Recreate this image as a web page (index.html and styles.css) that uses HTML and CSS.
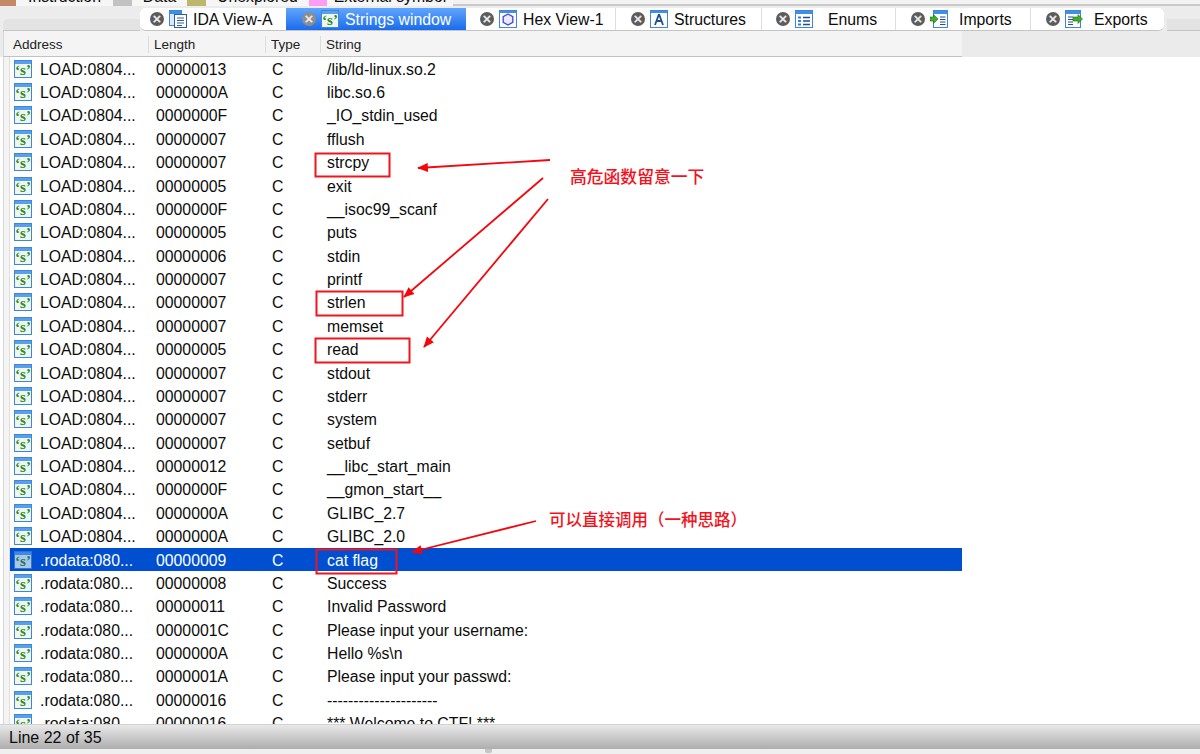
FILE: index.html
```html
<!DOCTYPE html>
<html lang="en">
<head>
<meta charset="utf-8">
<title>Strings window</title>
<link rel="stylesheet" href="styles.css">
</head>
<body>
<svg class="defs" width="0" height="0" aria-hidden="true">
  <symbol id="i-s" viewBox="0 0 18 18">
    <rect x=".5" y=".5" width="17" height="17" fill="#fff" stroke="#3d86dc"/>
    <rect x="1" y="1" width="16" height="3" fill="#58a0ee"/>
    <rect x="1" y="4" width="16" height="13" fill="#eef6f2"/>
    <text x="9" y="15" class="s-glyph" text-anchor="middle">‘s’</text>
  </symbol>
  <symbol id="i-ida" viewBox="0 0 18 18">
    <rect x=".5" y=".5" width="12" height="15" fill="#dbe9fb" stroke="#3d86dc"/>
    <rect x="1" y="1" width="11" height="3" fill="#3f8fe6"/>
    <rect x="5.500" y="4.500" width="12" height="13" fill="#fff" stroke="#2a5ea8"/>
    <path d="M8 8h7M8 10.500h7M8 13h7M8 15.500h5" stroke="#34609c" fill="none"/>
  </symbol>
  <symbol id="i-hex" viewBox="0 0 18 18">
    <rect x=".5" y=".5" width="17" height="17" fill="#fff" stroke="#3d86dc"/>
    <rect x="1" y="1" width="16" height="2" fill="#3f8fe6"/>
    <path d="M9 4l4.800 2.700v5.600L9 15l-4.800-2.700V6.700z" fill="#e9e9ff" stroke="#4a4ae0" stroke-width="1.400"/>
  </symbol>
  <symbol id="i-struct" viewBox="0 0 18 18">
    <rect x=".5" y=".5" width="17" height="17" fill="#fff" stroke="#3d86dc"/>
    <rect x="1" y="1" width="16" height="2" fill="#3f8fe6"/>
    <path d="M9 4L5 15M9 4l4 11M6.500 11h5" stroke="#234f8f" stroke-width="1.800" fill="none"/>
  </symbol>
  <symbol id="i-enum" viewBox="0 0 18 18">
    <rect x=".5" y=".5" width="17" height="17" fill="#fff" stroke="#3d86dc"/>
    <rect x="1" y="1" width="16" height="3" fill="#3f8fe6"/>
    <path d="M3 6.500h3v2H3zM3 10h3v2H3zM3 13.500h3v2H3z" fill="#2f7fe0"/>
    <path d="M8 7.500h7M8 11h7M8 14.500h7" stroke="#1f4f96" stroke-width="1.300"/>
  </symbol>
  <symbol id="i-imp" viewBox="0 0 18 18">
    <rect x="3.500" y=".5" width="14" height="17" fill="#fff" stroke="#3d86dc"/>
    <rect x="4" y="1" width="13" height="3" fill="#3f8fe6"/>
    <path d="M10 7h5.500M10 9.500h5.500M10 12h5.500M10 14.500h5.500" stroke="#1f4f96"/>
    <path d="M0 7h3.500V4.500L8 9l-4.500 4.500V11H0z" fill="#3fae2a" stroke="#1c6e12" stroke-width=".6"/>
  </symbol>
  <symbol id="i-exp" viewBox="0 0 18 18">
    <rect x=".5" y=".5" width="15" height="17" fill="#fff" stroke="#3d86dc"/>
    <rect x="1" y="1" width="14" height="3" fill="#3f8fe6"/>
    <path d="M3 7h5M3 9.500h5M3 12h5M3 14.500h5" stroke="#1f4f96"/>
    <path d="M8 7h5V4.500L17.500 9 13 13.500V11H8z" fill="#3fae2a" stroke="#1c6e12" stroke-width=".6"/>
  </symbol>
</svg>

<div class="legend">
  <span class="swatch swatch-code"></span><span class="legend-item legend-instruction">Instruction</span>
  <span class="swatch swatch-data"></span><span class="legend-item legend-data">Data</span>
  <span class="swatch swatch-unexplored"></span><span class="legend-item legend-unexplored">Unexplored</span>
  <span class="swatch swatch-external"></span><span class="legend-item legend-external">External symbol</span>
  <span class="legend-rest"></span>
</div>

<div class="tabbar">
  <div class="tab-pad"><div class="tab-pad-fill"></div></div>
  <div class="tabs">
    <div class="tab tab-ida"><span class="close">×</span><svg class="tab-icon"><use href="#i-ida"/></svg><span class="tab-label">IDA View-A</span></div>
    <div class="tab tab-strings active"><span class="close">×</span><svg class="tab-icon"><use href="#i-s"/></svg><span class="tab-label">Strings window</span></div>
    <div class="tab tab-hex"><span class="close">×</span><svg class="tab-icon"><use href="#i-hex"/></svg><span class="tab-label">Hex View-1</span></div>
    <div class="tab tab-struct"><span class="close">×</span><svg class="tab-icon"><use href="#i-struct"/></svg><span class="tab-label">Structures</span></div>
    <div class="tab tab-enum"><span class="close">×</span><svg class="tab-icon"><use href="#i-enum"/></svg><span class="tab-label">Enums</span></div>
    <div class="tab tab-imp"><span class="close">×</span><svg class="tab-icon"><use href="#i-imp"/></svg><span class="tab-label">Imports</span></div>
    <div class="tab tab-exp"><span class="close">×</span><svg class="tab-icon"><use href="#i-exp"/></svg><span class="tab-label">Exports</span></div>
  </div>
  <div class="tab-tail"><div class="tab-pad-fill"></div></div>
</div>

<div class="head">
  <div class="head-cells">
    <span class="hc hc-addr">Address</span>
    <span class="hc hc-len">Length</span>
    <span class="hc hc-type">Type</span>
    <span class="hc hc-str">String</span>
  </div>
</div>

<main class="list">
  <div class="row"><svg class="ri"><use href="#i-s"/></svg><span class="c-addr">LOAD:0804...</span><span class="c-len">00000013</span><span class="c-type">C</span><span class="c-str">/lib/ld-linux.so.2</span></div>
  <div class="row"><svg class="ri"><use href="#i-s"/></svg><span class="c-addr">LOAD:0804...</span><span class="c-len">0000000A</span><span class="c-type">C</span><span class="c-str">libc.so.6</span></div>
  <div class="row"><svg class="ri"><use href="#i-s"/></svg><span class="c-addr">LOAD:0804...</span><span class="c-len">0000000F</span><span class="c-type">C</span><span class="c-str">_IO_stdin_used</span></div>
  <div class="row"><svg class="ri"><use href="#i-s"/></svg><span class="c-addr">LOAD:0804...</span><span class="c-len">00000007</span><span class="c-type">C</span><span class="c-str">fflush</span></div>
  <div class="row"><svg class="ri"><use href="#i-s"/></svg><span class="c-addr">LOAD:0804...</span><span class="c-len">00000007</span><span class="c-type">C</span><span class="c-str">strcpy</span></div>
  <div class="row"><svg class="ri"><use href="#i-s"/></svg><span class="c-addr">LOAD:0804...</span><span class="c-len">00000005</span><span class="c-type">C</span><span class="c-str">exit</span></div>
  <div class="row"><svg class="ri"><use href="#i-s"/></svg><span class="c-addr">LOAD:0804...</span><span class="c-len">0000000F</span><span class="c-type">C</span><span class="c-str">__isoc99_scanf</span></div>
  <div class="row"><svg class="ri"><use href="#i-s"/></svg><span class="c-addr">LOAD:0804...</span><span class="c-len">00000005</span><span class="c-type">C</span><span class="c-str">puts</span></div>
  <div class="row"><svg class="ri"><use href="#i-s"/></svg><span class="c-addr">LOAD:0804...</span><span class="c-len">00000006</span><span class="c-type">C</span><span class="c-str">stdin</span></div>
  <div class="row"><svg class="ri"><use href="#i-s"/></svg><span class="c-addr">LOAD:0804...</span><span class="c-len">00000007</span><span class="c-type">C</span><span class="c-str">printf</span></div>
  <div class="row"><svg class="ri"><use href="#i-s"/></svg><span class="c-addr">LOAD:0804...</span><span class="c-len">00000007</span><span class="c-type">C</span><span class="c-str">strlen</span></div>
  <div class="row"><svg class="ri"><use href="#i-s"/></svg><span class="c-addr">LOAD:0804...</span><span class="c-len">00000007</span><span class="c-type">C</span><span class="c-str">memset</span></div>
  <div class="row"><svg class="ri"><use href="#i-s"/></svg><span class="c-addr">LOAD:0804...</span><span class="c-len">00000005</span><span class="c-type">C</span><span class="c-str">read</span></div>
  <div class="row"><svg class="ri"><use href="#i-s"/></svg><span class="c-addr">LOAD:0804...</span><span class="c-len">00000007</span><span class="c-type">C</span><span class="c-str">stdout</span></div>
  <div class="row"><svg class="ri"><use href="#i-s"/></svg><span class="c-addr">LOAD:0804...</span><span class="c-len">00000007</span><span class="c-type">C</span><span class="c-str">stderr</span></div>
  <div class="row"><svg class="ri"><use href="#i-s"/></svg><span class="c-addr">LOAD:0804...</span><span class="c-len">00000007</span><span class="c-type">C</span><span class="c-str">system</span></div>
  <div class="row"><svg class="ri"><use href="#i-s"/></svg><span class="c-addr">LOAD:0804...</span><span class="c-len">00000007</span><span class="c-type">C</span><span class="c-str">setbuf</span></div>
  <div class="row"><svg class="ri"><use href="#i-s"/></svg><span class="c-addr">LOAD:0804...</span><span class="c-len">00000012</span><span class="c-type">C</span><span class="c-str">__libc_start_main</span></div>
  <div class="row"><svg class="ri"><use href="#i-s"/></svg><span class="c-addr">LOAD:0804...</span><span class="c-len">0000000F</span><span class="c-type">C</span><span class="c-str">__gmon_start__</span></div>
  <div class="row"><svg class="ri"><use href="#i-s"/></svg><span class="c-addr">LOAD:0804...</span><span class="c-len">0000000A</span><span class="c-type">C</span><span class="c-str">GLIBC_2.7</span></div>
  <div class="row"><svg class="ri"><use href="#i-s"/></svg><span class="c-addr">LOAD:0804...</span><span class="c-len">0000000A</span><span class="c-type">C</span><span class="c-str">GLIBC_2.0</span></div>
  <div class="row selected"><svg class="ri"><use href="#i-s"/></svg><span class="c-addr">.rodata:080...</span><span class="c-len">00000009</span><span class="c-type">C</span><span class="c-str">cat flag</span></div>
  <div class="row"><svg class="ri"><use href="#i-s"/></svg><span class="c-addr">.rodata:080...</span><span class="c-len">00000008</span><span class="c-type">C</span><span class="c-str">Success</span></div>
  <div class="row"><svg class="ri"><use href="#i-s"/></svg><span class="c-addr">.rodata:080...</span><span class="c-len">00000011</span><span class="c-type">C</span><span class="c-str">Invalid Password</span></div>
  <div class="row"><svg class="ri"><use href="#i-s"/></svg><span class="c-addr">.rodata:080...</span><span class="c-len">0000001C</span><span class="c-type">C</span><span class="c-str">Please input your username:</span></div>
  <div class="row"><svg class="ri"><use href="#i-s"/></svg><span class="c-addr">.rodata:080...</span><span class="c-len">0000000A</span><span class="c-type">C</span><span class="c-str">Hello %s\n</span></div>
  <div class="row"><svg class="ri"><use href="#i-s"/></svg><span class="c-addr">.rodata:080...</span><span class="c-len">0000001A</span><span class="c-type">C</span><span class="c-str">Please input your passwd:</span></div>
  <div class="row"><svg class="ri"><use href="#i-s"/></svg><span class="c-addr">.rodata:080...</span><span class="c-len">00000016</span><span class="c-type">C</span><span class="c-str">---------------------</span></div>
  <div class="row"><svg class="ri"><use href="#i-s"/></svg><span class="c-addr">.rodata:080...</span><span class="c-len">00000016</span><span class="c-type">C</span><span class="c-str">*** Welcome to CTF! ***</span></div>
</main>

<footer class="status">Line 22 of 35</footer>
<div class="splitter"><span class="grip"></span></div>

<svg class="marks" width="1200" height="754" viewBox="0 0 1200 754" aria-hidden="true">
  <defs>
    <marker id="ah" viewBox="0 0 12 10" refX="11" refY="5" markerWidth="12" markerHeight="9" markerUnits="userSpaceOnUse" orient="auto">
      <path d="M0 0L12 5 0 10z" fill="#f5050c"/>
    </marker>
  </defs>
  <g class="box">
    <rect x="315.500" y="153.500" width="74" height="23"/>
    <rect x="316.500" y="291.500" width="86" height="24"/>
    <rect x="315.500" y="338.500" width="94" height="24"/>
    <rect x="316.500" y="549.500" width="80" height="24"/>
  </g>
  <g class="arrow">
    <line x1="550" y1="160" x2="418" y2="168" marker-end="url(#ah)"/>
    <line x1="543" y1="178" x2="404" y2="297" marker-end="url(#ah)"/>
    <line x1="548" y1="199" x2="424" y2="347" marker-end="url(#ah)"/>
    <line x1="536" y1="521" x2="412" y2="552" marker-end="url(#ah)"/>
  </g>
</svg>
<span class="note note-a">高危函数留意一下</span>
<span class="note note-b">可以直接调用（一种思路）</span>
</body>
</html>
```

FILE: styles.css
```css
* { box-sizing: border-box; }

html, body { margin: 0; padding: 0; }

body {
  width: 1200px;
  height: 754px;
  overflow: hidden;
  position: relative;
  display: flex;
  flex-direction: column;
  background: #ececec;
  color: #0c0c0c;
  font-family: "Liberation Sans", Arial, sans-serif;
  font-size: 15.800px;
}

.defs { position: absolute; }

/* top legend, cut off by the screenshot */
.legend {
  height: 6px;
  flex: none;
  display: flex;
  align-items: flex-end;
  overflow: hidden;
  background: #f2f2f2;
}
.swatch { height: 6px; flex: none; align-self: stretch; }
.swatch-code { width: 16px; background: #c48a68; }
.swatch-data { width: 19px; background: #c2c2c2; }
.swatch-unexplored { width: 19px; background: #bdb76b; }
.swatch-external { width: 18px; background: #ff9df5; }
.legend-item {
  flex: none;
  display: block;
  height: 18px;
  line-height: 18px;
  text-align: center;
  white-space: nowrap;
  background: #f6f6f6;
}
.legend-instruction { width: 97px; }
.legend-data { width: 55px; }
.legend-unexplored { width: 103px; }
.legend-external { width: 126px; }
.legend-rest {
  flex: 1;
  height: 2px;
  background: #c9c9c9;
}

/* tab strip */
.tabbar {
  height: 25px;
  flex: none;
  display: flex;
  background: #ececec;
}
.tab-pad, .tab-tail {
  display: flex;
  align-items: flex-end;
  flex: none;
}
.tab-pad { width: 140px; padding-left: 3px; }
.tab-tail { flex: 1; padding-left: 3px; }
.tab-pad-fill {
  width: 100%;
  height: 12px;
  background: #e3e3e3;
  border-bottom: 1px solid #c4c4c4;
}
.tab-pad .tab-pad-fill { border-top-left-radius: 5px; }
.tabs {
  flex: none;
  display: flex;
  margin-top: 2px;
  height: 23px;
  border-radius: 6px;
  overflow: hidden;
  border-bottom: 1px solid #c4c4c4;
  background: #fff;
}
.tab {
  flex: none;
  display: flex;
  align-items: center;
  padding-left: 15px;
  background: #fff;
  border-right: 1px solid #dedede;
  white-space: nowrap;
  font-size: 15.800px;
}
.tab-label { padding-top: 2px; }
.tab-ida { width: 146px; padding-left: 10px; border-right: 0; }
.tab-strings { width: 180px; padding-left: 16px; }
.tab-hex { width: 150px; padding-left: 14px; }
.tab-struct { width: 146px; }
.tab-enum { width: 134px; padding-left: 14px; }
.tab-imp { width: 135px; }
.tab-exp { width: 133px; border-right: 0; }
.active {
  background: linear-gradient(#61a5fb, #1a6cee);
  color: #fff;
  border-right: 0;
}
.close {
  width: 14px;
  height: 14px;
  flex: none;
  border-radius: 50%;
  background: #5c5c5c;
  color: #ececec;
  font-size: 15px;
  font-weight: bold;
  line-height: 13px;
  text-align: center;
}
.active .close { background: #8d8d8d; }
.tab-icon { width: 18px; height: 18px; flex: none; margin: 0 6px 0 5px; }
.tab-enum .tab-icon { margin-right: 15px; }
.tab-imp .tab-icon, .tab-exp .tab-icon { margin-right: 11px; }

/* table header */
.head {
  height: 26px;
  flex: none;
  background: #ebebeb;
}
.head-cells {
  height: 26px;
  margin-left: 3px;
  width: 959px;
  display: flex;
  align-items: center;
  padding-top: 2px;
  background: #f4f4f4;
  border-bottom: 1px solid #c2c2c2;
  border-left: 1px solid #d6d6d6;
  font-size: 13.500px;
  color: #222;
}
.hc {
  height: 17px;
  line-height: 17px;
  flex: none;
  border-right: 1px solid #dcdcdc;
}
.hc-addr { width: 145px; padding-left: 9px; }
.hc-len { width: 117px; padding-left: 5px; }
.hc-type { width: 55px; padding-left: 5px; }
.hc-str { flex: 1; padding-left: 5px; border-right: 0; }

/* rows */
.list {
  flex: 1;
  min-height: 0;
  overflow: hidden;
  background: #fff;
  padding: 0 238px 0 8px;
  position: relative;
}
.list::before {
  content: "";
  position: absolute;
  left: 3px;
  top: 0;
  bottom: 0;
  width: 5px;
  background: #f4f4f4;
  border-left: 1px solid #d6d6d6;
  border-right: 1px solid #dedede;
}
.row {
  height: 23.380px;
  display: flex;
  align-items: center;
  white-space: nowrap;
}
.ri { width: 18px; height: 18px; flex: none; margin-left: 6px; margin-right: 8px; }
.c-addr, .c-len, .c-type, .c-str { padding-top: 2px; }
.c-addr { width: 116px; flex: none; }
.c-len { width: 116px; flex: none; }
.c-type { width: 55px; flex: none; }
.c-str { flex: 1; }
.selected { background: #004fd1; color: #fff; }
.selected .ri { opacity: .72; }
.s-glyph {
  font-family: "Liberation Serif", serif;
  font-weight: bold;
  font-size: 15px;
  fill: #2e8b1f;
}

/* status */
.status {
  height: 25px;
  flex: none;
  padding-left: 9px;
  line-height: 25px;
  font-size: 16px;
  background: linear-gradient(#e8e8e8, #adadad);
  border-top: 1px solid #d2d2d2;
}
.splitter {
  height: 5px;
  flex: none;
  background: #efefef;
  display: flex;
  justify-content: center;
  padding-right: 224px;
}
.grip { width: 7px; height: 4px; background: #c4c4c4; border-radius: 0 0 2px 2px; }

/* annotations drawn over the screenshot */
.marks { position: absolute; left: 0; top: 0; pointer-events: none; }
.box rect { fill: none; stroke: #f0141c; stroke-width: 2; }
.arrow line { stroke: #f5050c; stroke-width: 1.800; }
.note {
  position: absolute;
  color: #f5101a;
  font-family: "Noto Sans CJK SC", "Liberation Sans", sans-serif;
  font-weight: 500;
  white-space: nowrap;
  line-height: 20px;
}
.note-a { left: 570px; top: 166px; font-size: 16.800px; }
.note-b { left: 549px; top: 509px; font-size: 16.500px; }
```
